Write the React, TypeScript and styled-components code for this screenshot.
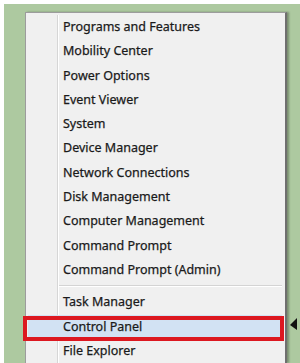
import styled, { createGlobalStyle } from 'styled-components';

const GlobalStyle = createGlobalStyle`
	html, body {
		margin: 0;
		padding: 0;
		background: #ffffff;
	}
`;

const Page = styled.div`
	width: 300px;
	height: 363px;
	padding: 4px 0 0 4px;
	box-sizing: border-box;
	background: #ffffff;
	overflow: hidden;
`;

const Backdrop = styled.div`
	position: relative;
	height: 100%;
	padding: 8px 0 0 21px;
	box-sizing: border-box;
	background: #adc9a0;
`;

const Menu = styled.div`
	width: 262px;
	height: 100%;
	box-sizing: border-box;
	border: 1px solid #9c9c9c;
	border-right: 2px solid #6f6f6f;
	border-bottom: none;
	background: #f0f0f0;
	box-shadow: 2px 0 2px rgba(0, 0, 0, 0.3);
	padding: 2px 3px 0 31px;
	font-family: 'Noto Sans', 'Open Sans', sans-serif;
	font-size: 12.5px;
	color: #1a1a1a;
	-webkit-text-stroke: 0.25px #1a1a1a;
`;

const Items = styled.div`
	height: 100%;
	border-left: 1px solid #d6d6d6;
	box-shadow: inset 1px 0 0 #ffffff;
`;

const Item = styled.div<{ $active?: boolean }>`
	position: relative;
	height: 24.3px;
	line-height: 24.3px;
	white-space: nowrap;
	margin-left: ${p => (p.$active ? '-30px' : '0')};
	padding-left: ${p => (p.$active ? '35px' : '5px')};
	background: ${p => (p.$active ? '#d2e2f3' : 'transparent')};
`;

const Separator = styled.div`
	height: 1px;
	margin: 3px 0 4px 1px;
	background: #d4d4d4;
	box-shadow: 0 1px 0 #ffffff;
`;

const RedFrame = styled.div`
	position: absolute;
	left: -5px;
	right: -2px;
	top: 1px;
	height: 25px;
	box-sizing: border-box;
	border: 4px solid #dc1820;
	pointer-events: none;
`;

const Pointer = styled.svg`
	position: absolute;
	left: 285px;
	top: 313px;
`;

const topItems = [
	'Programs and Features',
	'Mobility Center',
	'Power Options',
	'Event Viewer',
	'System',
	'Device Manager',
	'Network Connections',
	'Disk Management',
	'Computer Management',
	'Command Prompt',
	'Command Prompt (Admin)',
];

export default function App() {
	return (
		<>
			<GlobalStyle />
			<Page>
				<Backdrop>
					<Menu>
						<Items>
							{topItems.map(label => (
								<Item key={label}>{label}</Item>
							))}
							<Separator />
							<Item>Task Manager</Item>
							<Item $active>
								Control Panel
								<RedFrame />
							</Item>
							<Item>File Explorer</Item>
						</Items>
					</Menu>
					<Pointer width="12" height="14" viewBox="0 0 12 14">
						<polygon points="1,8 8,1 8,13" fill="#111111" />
					</Pointer>
				</Backdrop>
			</Page>
		</>
	);
}
